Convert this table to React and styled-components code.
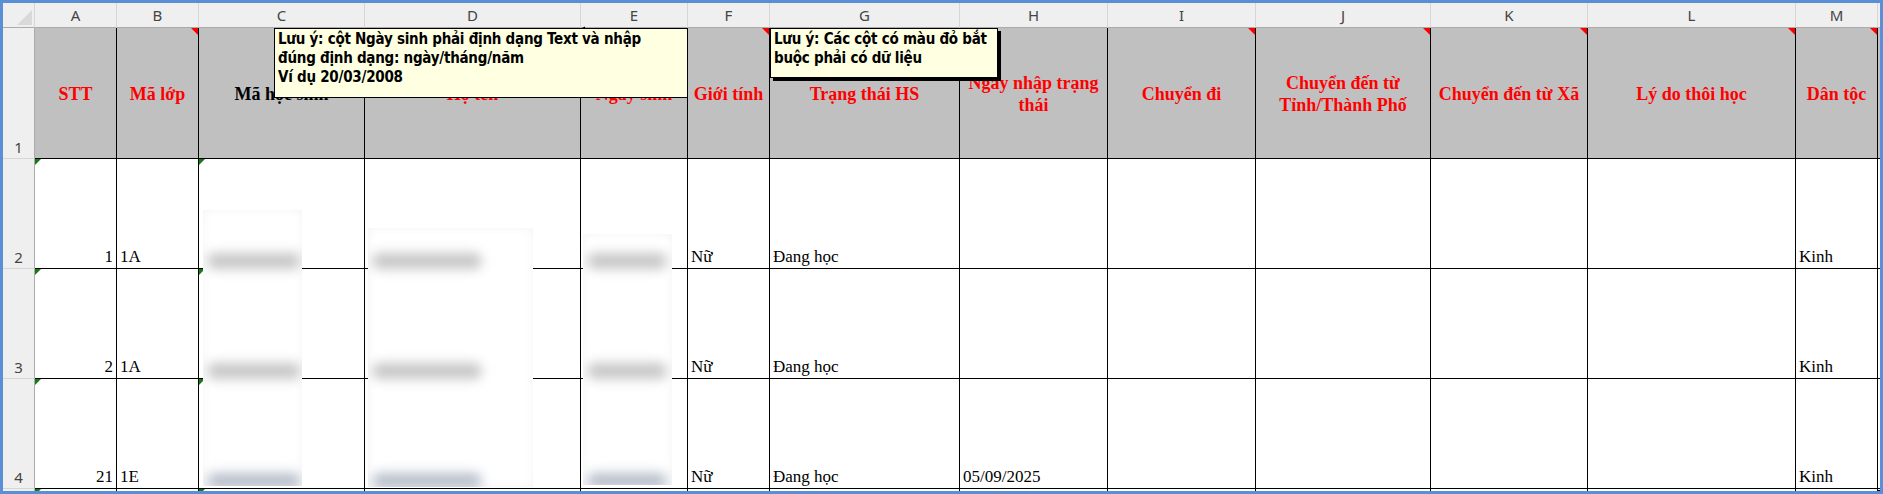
import React from "react";
import styled, { createGlobalStyle, css } from "styled-components";

/*
  Excel sheet fragment: column letters, a tall grey title row with bold red
  Times headings, three tall data rows, two cell comments floating over the
  title row and redaction blurs over the personal-data columns.
*/

const COLUMNS = [
  { id: "A", width: 82, title: "STT", red: true },
  { id: "B", width: 82, title: "Mã lớp", red: true, note: true },
  { id: "C", width: 166, title: "Mã học sinh" },
  { id: "D", width: 216, title: "Họ tên", red: true },
  { id: "E", width: 107, title: "Ngày sinh", red: true },
  { id: "F", width: 82, title: "Giới tính", red: true, note: true },
  { id: "G", width: 190, title: "Trạng thái HS", red: true },
  { id: "H", width: 148, title: "Ngày nhập trạng thái", red: true },
  { id: "I", width: 148, title: "Chuyển đi", red: true, note: true },
  { id: "J", width: 175, title: "Chuyển đến từ Tỉnh/Thành Phố", red: true, note: true },
  { id: "K", width: 157, title: "Chuyển đến từ Xã", red: true, note: true },
  { id: "L", width: 208, title: "Lý do thôi học", red: true, note: true },
  { id: "M", width: 82, title: "Dân tộc", red: true, note: true },
];

const ROWS = [
  { n: 2, A: "1", B: "1A", F: "Nữ", G: "Đang học", M: "Kinh" },
  { n: 3, A: "2", B: "1A", F: "Nữ", G: "Đang học", M: "Kinh" },
  { n: 4, A: "21", B: "1E", F: "Nữ", G: "Đang học", H: "05/09/2025", M: "Kinh" },
];

// columns whose cells carry Excel's green "number stored as text" flag
const FLAGGED = ["A", "C"];

// redaction blurs, in sheet coordinates (inside the blue frame)
const REDACTIONS = [
  { id: "C", x: 200, y: 207, w: 99, h: 276, bar: 94 },
  { id: "D", x: 365, y: 225, w: 165, h: 259, bar: 110 },
  { id: "E", x: 580, y: 231, w: 89, h: 251, bar: 80 },
];

export default function App() {
  return (
    <>
      <GlobalStyle />
      <Frame>
        <Sheet>
          <Corner />
          {COLUMNS.map((c) => (
            <ColHead key={c.id}>{c.id}</ColHead>
          ))}
          <ColHead $edge />

          <RowHead>1</RowHead>
          {COLUMNS.map((c) => (
            <TitleCell key={c.id} $red={c.red} $note={c.note}>
              <span>{c.title}</span>
            </TitleCell>
          ))}
          <Filler $tone="title" />

          {ROWS.map((r) => (
            <React.Fragment key={r.n}>
              <RowHead>{r.n}</RowHead>
              {COLUMNS.map((c) => (
                <DataCell key={c.id} $right={c.id === "A"} $flag={FLAGGED.includes(c.id)}>
                  {r[c.id] || ""}
                </DataCell>
              ))}
              <Filler />
            </React.Fragment>
          ))}

          <RowHead $stub />
          {COLUMNS.map((c) => (
            <DataCell key={c.id} $stub $flag={FLAGGED.includes(c.id)} />
          ))}
          <Filler />
        </Sheet>

        {REDACTIONS.map((b) => (
          <Redaction key={b.id} style={{ left: b.x, top: b.y, width: b.w, height: b.h }}>
            {[0, 1, 2].map((i) => (
              <BlurBar key={i} $last={i === 2} style={{ top: 258 - b.y + i * 110 - 8, width: b.bar }} />
            ))}
          </Redaction>
        ))}

        <Connector width="32" height="6" viewBox="0 0 32 6">
          <path d="M1 3 L31 3" stroke="#000" strokeWidth="1" />
          <path d="M0 3 L5 0.5 L5 5.5 Z" fill="#000" />
        </Connector>

        <Comment $x={271} $y={25} $w={414} $h={70}>
          Lưu ý: cột Ngày sinh phải định dạng Text và nhập
          <br />
          đúng định dạng: ngày/tháng/năm
          <br />
          Ví dụ 20/03/2008
        </Comment>
        <Comment $x={767} $y={25} $w={228} $h={50} $shadow>
          Lưu ý: Các cột có màu đỏ bắt
          <br />
          buộc phải có dữ liệu
        </Comment>
      </Frame>
    </>
  );
}

const GlobalStyle = createGlobalStyle`
  html, body {
    margin: 0;
    padding: 0;
    background: #fff;
  }
  body {
    width: 1883px;
    height: 494px;
    overflow: hidden;
  }
`;

const Frame = styled.div`
  position: relative;
  box-sizing: border-box;
  width: 1883px;
  height: 494px;
  border: 3px solid #5a8fd6;
  overflow: hidden;
  background: #fff;
`;

const Sheet = styled.div`
  display: grid;
  grid-template-columns: 32px ${COLUMNS.map((c) => `${c.width}px`).join(" ")} 2px;
  grid-template-rows: 25px 131px 110px 110px 110px 2px;
`;

const headerFont = css`
  font-family: "Segoe UI", "Noto Sans", "Open Sans", sans-serif;
  font-size: 15px;
  color: #444;
`;

const Corner = styled.div`
  position: relative;
  box-sizing: border-box;
  background: #efefef;
  border-right: 1px solid #d6d6d6;
  border-bottom: 1px solid #ababab;

  &::after {
    content: "";
    position: absolute;
    right: 2px;
    bottom: 2px;
    width: 15px;
    height: 15px;
    background: #d9d9d9;
    clip-path: polygon(100% 0, 100% 100%, 0 100%);
  }
`;

const ColHead = styled.div`
  ${headerFont};
  box-sizing: border-box;
  display: flex;
  align-items: center;
  justify-content: center;
  background: #efefef;
  border-right: ${(p) => (p.$edge ? "none" : "1px solid #d6d6d6")};
  border-bottom: 1px solid #ababab;
  line-height: 1;
  padding-top: 1px;
`;

const RowHead = styled.div`
  ${headerFont};
  box-sizing: border-box;
  display: flex;
  align-items: flex-end;
  justify-content: center;
  background: #efefef;
  border-right: 1px solid #ababab;
  border-bottom: ${(p) => (p.$stub ? "none" : "1px solid #d6d6d6")};
  line-height: 18px;
  padding-bottom: 2px;
`;

const redCorner = css`
  &::after {
    content: "";
    position: absolute;
    top: 0;
    right: 0;
    width: 7px;
    height: 7px;
    background: #ff0000;
    clip-path: polygon(0 0, 100% 0, 100% 100%);
  }
`;

const TitleCell = styled.div`
  position: relative;
  box-sizing: border-box;
  display: flex;
  align-items: center;
  justify-content: center;
  padding: 2px 3px 0;
  background: #c0c0c0;
  border-right: 1px solid #000;
  border-bottom: 1px solid #000;
  font-family: "Times New Roman", "Liberation Serif", serif;
  font-weight: 700;
  font-size: 18px;
  line-height: 22px;
  text-align: center;
  color: ${(p) => (p.$red ? "#ff0000" : "#000")};

  ${(p) => p.$note && redCorner};
`;

const greenCorner = css`
  &::before {
    content: "";
    position: absolute;
    top: 0;
    left: 0;
    width: 6px;
    height: 6px;
    background: #147a14;
    clip-path: polygon(0 0, 100% 0, 0 100%);
  }
`;

const DataCell = styled.div`
  position: relative;
  box-sizing: border-box;
  display: flex;
  align-items: flex-end;
  justify-content: ${(p) => (p.$right ? "flex-end" : "flex-start")};
  padding: 0 3px 1px;
  background: #fff;
  border-right: 1px solid #000;
  border-bottom: ${(p) => (p.$stub ? "none" : "1px solid #000")};
  font-family: "Times New Roman", "Liberation Serif", serif;
  font-size: 17px;
  line-height: 20px;
  color: #000;
  white-space: nowrap;
  overflow: hidden;

  ${(p) => p.$flag && greenCorner};
`;

const Filler = styled.div`
  background: ${(p) => (p.$tone === "title" ? "#c0c0c0" : "#fff")};
  border-bottom: 1px solid #000;
`;

const Redaction = styled.div`
  position: absolute;
  background: #fff;
  box-shadow: inset 0 0 10px rgba(0, 0, 0, 0.05);
  overflow: hidden;
`;

const BlurBar = styled.div`
  position: absolute;
  left: 4px;
  height: 16px;
  border-radius: 8px;
  background: ${(p) => (p.$last ? "#b8bfcb" : "#c6c6c6")};
  filter: blur(6px);
`;

const Connector = styled.svg`
  position: absolute;
  left: 577px;
  top: 23px;
  display: block;
`;

const Comment = styled.div`
  position: absolute;
  left: ${(p) => p.$x}px;
  top: ${(p) => p.$y}px;
  width: ${(p) => p.$w}px;
  height: ${(p) => p.$h}px;
  box-sizing: border-box;
  padding: 1px 3px 0;
  background: #ffffe1;
  border: 1px solid #000;
  box-shadow: ${(p) => (p.$shadow ? "3px 3px 0 #000" : "none")};
  font-family: "DejaVu Sans Condensed", "DejaVu Sans", sans-serif;
  font-weight: 700;
  font-size: 15px;
  letter-spacing: -0.25px;
  line-height: 19px;
  color: #000;
  white-space: nowrap;
`;
